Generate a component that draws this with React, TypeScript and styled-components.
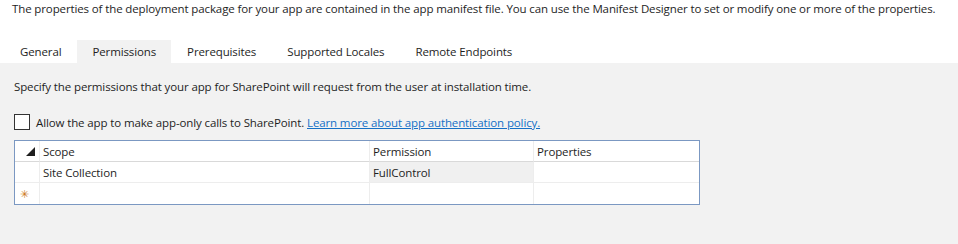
import React from 'react'
import styled, { createGlobalStyle } from 'styled-components'

const GlobalStyle = createGlobalStyle`
  html, body {
    margin: 0;
    padding: 0;
    background: #f2f2f2;
  }
  body {
    font-family: 'Open Sans', 'Noto Sans', sans-serif;
    font-size: 11.5px;
    letter-spacing: -0.12px;
    color: #1e1e1e;
  }
`

const color = {
  white: '#ffffff',
  panel: '#f2f2f2',
  text: '#1e1e1e',
  link: '#1570c6',
  gridBorder: '#7b98c2',
  headerLine: '#d9d9d9',
  rowLine: '#ededed',
  readOnly: '#f0f0f0',
  star: '#cc7a22',
}

const Page = styled.div`
  display: flex;
  flex-direction: column;
  width: 958px;
  min-height: 244px;
`

const Top = styled.div`
  background: ${color.white};
  display: flex;
  flex-direction: column;
`

const Intro = styled.div`
  height: 16px;
  line-height: 16px;
  padding: 1px 0 0 12px;
  white-space: nowrap;
`

const TabStrip = styled.div`
  display: flex;
  gap: 1px;
  margin-top: 23px;
  padding-left: 5px;
  height: 23px;
`

const Tab = styled.div<{ $active?: boolean }>`
  display: flex;
  align-items: center;
  padding: 0 15px;
  height: 23px;
  background: ${p => (p.$active ? color.panel : 'transparent')};
`

const Content = styled.div`
  flex: 1;
  display: flex;
  flex-direction: column;
  padding: 16px 14px 0 14px;
`

const Hint = styled.div`
  height: 16px;
  line-height: 16px;
`

const CheckRow = styled.label`
  display: flex;
  align-items: center;
  gap: 6px;
  margin-top: 19px;
  height: 16px;
  white-space: nowrap;
`

const Box = styled.span`
  width: 14px;
  height: 14px;
  border: 1px solid #333333;
  background: ${color.white};
  flex: none;
`

const Link = styled.a`
  color: ${color.link};
  text-decoration: underline;
  cursor: pointer;
`

const Grid = styled.div`
  margin-top: 10px;
  width: 684px;
  border: 1px solid ${color.gridBorder};
  background: ${color.white};
  display: grid;
  grid-template-columns: 25px 330px 164px 1fr;
`

const Cell = styled.div<{ $header?: boolean; $last?: boolean; $grey?: boolean }>`
  height: 21px;
  box-sizing: border-box;
  display: flex;
  align-items: center;
  padding-left: 3px;
  border-right: ${p => (p.$last ? 'none' : `1px solid ${color.rowLine}`)};
  border-bottom: 1px solid ${p => (p.$header ? color.headerLine : color.rowLine)};
  background: ${p => (p.$grey ? color.readOnly : color.white)};
  &:nth-last-child(-n + 4) {
    border-bottom: none;
  }
`

const RowHead = styled(Cell)`
  padding-left: 0;
  justify-content: flex-end;
`

const Star = styled.span`
  color: ${color.star};
  font-size: 11px;
  width: 100%;
  padding-left: 5px;
  line-height: 1;
`

const SortGlyph = () => (
  <svg width="9" height="9" viewBox="0 0 9 9" style={{ marginRight: 4 }}>
    <polygon points="9,0 9,9 0,9" fill="#1e1e1e" />
  </svg>
)

const tabs = ['General', 'Permissions', 'Prerequisites', 'Supported Locales', 'Remote Endpoints']

export default function App() {
  return (
    <Page>
      <GlobalStyle />
      <Top>
        <Intro>
          The properties of the deployment package for your app are contained in the app manifest file. You can use the
          Manifest Designer to set or modify one or more of the properties.
        </Intro>
        <TabStrip>
          {tabs.map(t => (
            <Tab key={t} $active={t === 'Permissions'}>
              {t}
            </Tab>
          ))}
        </TabStrip>
      </Top>
      <Content>
        <Hint>Specify the permissions that your app for SharePoint will request from the user at installation time.</Hint>
        <CheckRow>
          <Box />
          <span>
            Allow the app to make app-only calls to SharePoint. <Link>Learn more about app authentication policy.</Link>
          </span>
        </CheckRow>
        <Grid>
          <RowHead $header>
            <SortGlyph />
          </RowHead>
          <Cell $header>Scope</Cell>
          <Cell $header>Permission</Cell>
          <Cell $header $last>Properties</Cell>

          <RowHead />
          <Cell>Site Collection</Cell>
          <Cell $grey>FullControl</Cell>
          <Cell $last />

          <RowHead>
            <Star>✳</Star>
          </RowHead>
          <Cell />
          <Cell />
          <Cell $last />
        </Grid>
      </Content>
    </Page>
  )
}
